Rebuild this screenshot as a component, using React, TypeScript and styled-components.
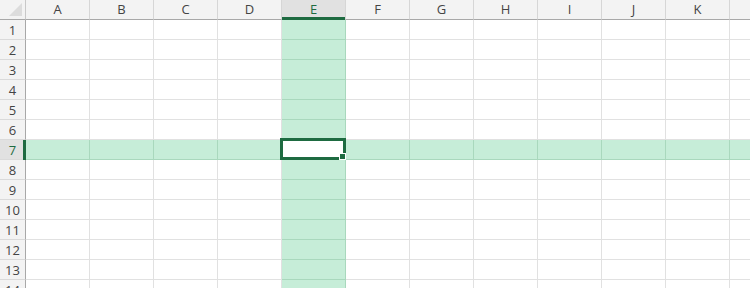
import React from "react";
import styled, { createGlobalStyle, css } from "styled-components";

const GlobalStyle = createGlobalStyle`
  html, body { margin: 0; padding: 0; background: #ffffff; overflow: hidden; }
  body { font-family: "Open Sans", "Noto Sans", "Liberation Sans", sans-serif; }
`;

const COLS = ["A", "B", "C", "D", "E", "F", "G", "H", "I", "J", "K", "L"];
const ROWS = Array.from({ length: 14 }, (_, i) => i + 1);
const SEL_COL = 4;
const SEL_ROW = 7;

const GREEN = "#1e6b41";
const HL = "#c6edd8";
const HL_LINE = "#a9d8bd";

const Sheet = styled.div`
  display: grid;
  grid-template-columns: 26px repeat(${COLS.length}, 64px);
  grid-auto-rows: 20px;
  width: 750px;
  height: 288px;
  overflow: hidden;
`;

const Corner = styled.div`
  position: relative;
  background: #f3f3f3;
  border-right: 1px solid #c8c8c8;
  border-bottom: 1px solid #a8a8a8;
  box-sizing: border-box;
`;

const CornerTriangle = styled.div`
  position: absolute;
  right: 3px;
  bottom: 3px;
  width: 0;
  height: 0;
  border-left: 13px solid transparent;
  border-bottom: 13px solid #dcdcdc;
`;

const ColHeader = styled.div<{ $active?: boolean }>`
  position: relative;
  box-sizing: border-box;
  display: flex;
  align-items: center;
  justify-content: center;
  font-size: 13px;
  color: ${(p) => (p.$active ? GREEN : "#444")};
  background: ${(p) => (p.$active ? "#e1e1e1" : "#f3f3f3")};
  border-right: 1px solid #d6d6d6;
  border-bottom: 1px solid #a8a8a8;
  padding-bottom: 1px;
  ${(p) =>
    p.$active &&
    css`
      &::after {
        content: "";
        position: absolute;
        left: 0;
        right: 0;
        bottom: -1px;
        height: 3px;
        background: ${GREEN};
      }
    `}
`;

const RowHeader = styled.div<{ $active?: boolean }>`
  position: relative;
  box-sizing: border-box;
  display: flex;
  align-items: center;
  justify-content: center;
  font-size: 13px;
  color: ${(p) => (p.$active ? GREEN : "#444")};
  background: ${(p) => (p.$active ? "#e1e1e1" : "#f3f3f3")};
  border-right: 1px solid #a8a8a8;
  border-bottom: 1px solid #dadada;
  ${(p) =>
    p.$active &&
    css`
      &::after {
        content: "";
        position: absolute;
        top: 0;
        bottom: -1px;
        right: -1px;
        width: 3px;
        background: ${GREEN};
      }
    `}
`;

const Cell = styled.div<{ $hl?: boolean; $sel?: boolean }>`
  position: relative;
  box-sizing: border-box;
  background: ${(p) => (p.$sel ? "#ffffff" : p.$hl ? HL : "#ffffff")};
  border-right: 1px solid ${(p) => (p.$hl ? HL_LINE : "#e1e1e1")};
  border-bottom: 1px solid ${(p) => (p.$hl ? HL_LINE : "#e1e1e1")};
  ${(p) => p.$sel && css`z-index: 2;`}
`;

const SelectionBox = styled.div`
  position: absolute;
  left: -2px;
  top: -2px;
  right: -1px;
  bottom: -1px;
  border: 3px solid ${GREEN};
  pointer-events: none;
`;

const FillHandle = styled.div`
  position: absolute;
  right: -3px;
  bottom: -3px;
  width: 5px;
  height: 5px;
  background: ${GREEN};
  border: 1px solid #ffffff;
`;

export default function App() {
  return (
    <>
      <GlobalStyle />
      <Sheet>
        <Corner>
          <CornerTriangle />
        </Corner>
        {COLS.map((c, i) => (
          <ColHeader key={c} $active={i === SEL_COL}>
            {c === "L" ? "" : c}
          </ColHeader>
        ))}
        {ROWS.map((r) => (
          <React.Fragment key={r}>
            <RowHeader $active={r === SEL_ROW}>{r}</RowHeader>
            {COLS.map((c, i) => {
              const sel = r === SEL_ROW && i === SEL_COL;
              const hl = r === SEL_ROW || i === SEL_COL;
              return (
                <Cell key={c} $hl={hl} $sel={sel}>
                  {sel && (
                    <SelectionBox>
                      <FillHandle />
                    </SelectionBox>
                  )}
                </Cell>
              );
            })}
          </React.Fragment>
        ))}
      </Sheet>
    </>
  );
}
